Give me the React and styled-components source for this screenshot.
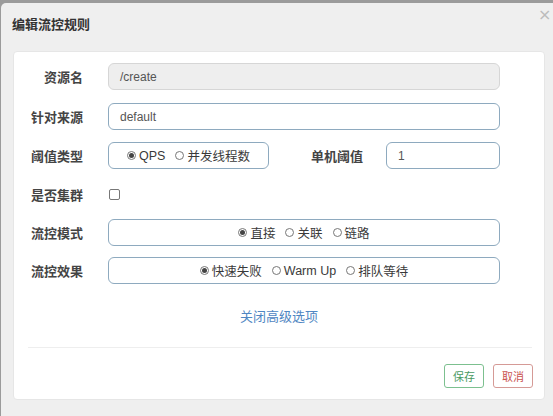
import React from 'react';
import styled, { createGlobalStyle } from 'styled-components';

const GlobalStyle = createGlobalStyle`
  html, body {
    margin: 0;
    padding: 0;
    width: 553px;
    height: 416px;
    overflow: hidden;
    background: #9b9b9b;
    font-family: 'Liberation Sans', 'Noto Sans CJK SC', sans-serif;
  }
`;

const DIALOG = styled.div`
  margin: 3px 0 0 1px;
  width: 552px;
  height: 413px;
  background: #efefef;
  border-radius: 5px 0 0 0;
  position: relative;
`;

const HEADER = styled.div`
  height: 48px;
  padding: 0 0 0 11px;
  display: flex;
  align-items: center;

  h3 {
    margin: 0 0 7px;
    font-size: 13px;
    font-weight: bold;
    color: #333;
  }
`;

const CLOSE = styled.span`
  position: absolute;
  left: 537px;
  top: 4px;
  font-size: 16px;
  line-height: 16px;
  color: #bcbcbc;
  font-family: 'DejaVu Sans', sans-serif;
`;

const PANEL = styled.div`
  margin-left: 12px;
  width: 532px;
  height: 349px;
  box-sizing: border-box;
  background: #fff;
  border: 1px solid #e6e6e6;
  border-radius: 4px;
  padding-top: 11px;
  display: flex;
  flex-direction: column;
`;

const ROW = styled.div`
  display: flex;
  align-items: center;
  height: 27px;
  margin-bottom: ${(p) => p.$mb ?? 12}px;
  padding-right: 44px;
`;

const LABEL = styled.label`
  width: ${(p) => p.$w || 69}px;
  flex: none;
  text-align: right;
  font-size: 13px;
  font-weight: bold;
  color: #444;
  margin-right: ${(p) => p.$gap || 25}px;
`;

const INPUT = styled.div`
  flex: 1;
  height: 27px;
  box-sizing: border-box;
  border: 1px solid ${(p) => (p.$disabled ? '#d6d6d6' : '#8eaabf')};
  background: ${(p) => (p.$disabled ? '#eeeeee' : '#fff')};
  border-radius: 6px;
  padding-left: 11px;
  display: flex;
  align-items: center;
  font-size: 12px;
  color: #555;
`;

const GROUP = styled.div`
  flex: ${(p) => (p.$w ? 'none' : '1')};
  width: ${(p) => (p.$w ? `${p.$w}px` : 'auto')};
  height: 27px;
  box-sizing: border-box;
  border: 1px solid #8eaabf;
  border-radius: 6px;
  display: flex;
  align-items: center;
  justify-content: center;
  gap: 10px;
  font-size: 12.5px;
  color: #3a3a3a;
`;

const OPTION = styled.span`
  display: flex;
  align-items: center;
  gap: 3px;
`;

const DOT = styled.span`
  width: 9px;
  height: 9px;
  border: 1px solid #777;
  border-radius: 50%;
  display: inline-flex;
  align-items: center;
  justify-content: center;
  box-sizing: border-box;

  &::after {
    content: '';
    width: 5px;
    height: 5px;
    border-radius: 50%;
    background: ${(p) => (p.$on ? '#444' : 'transparent')};
  }
`;

const CHECK = styled.span`
  width: 9px;
  height: 9px;
  margin-left: 1px;
  border: 1px solid #777;
  border-radius: 2px;
`;

const LINK = styled.a`
  align-self: center;
  margin-top: 22px;
  font-size: 13px;
  color: #4f86c2;
  text-decoration: none;
`;

const HR = styled.div`
  margin: 22px 12px 0 14px;
  height: 1px;
  background: #eeeeee;
`;

const FOOTER = styled.div`
  display: flex;
  justify-content: flex-end;
  gap: 9px;
  padding: 16px 11px 0 0;
`;

const BUTTON = styled.button`
  width: 40px;
  height: 24px;
  padding: 0;
  background: #fff;
  border: 1px solid ${(p) => (p.$danger ? '#d59a96' : '#7cc08f')};
  border-radius: 3px;
  color: ${(p) => (p.$danger ? '#c9534f' : '#4a9a62')};
  font-size: 11px;
  font-family: inherit;
`;

const Radio = ({ on, children }) => (
  <OPTION>
    <DOT $on={on} />
    {children}
  </OPTION>
);

export default function App() {
  return (
    <>
      <GlobalStyle />
      <DIALOG>
        <HEADER>
          <h3>编辑流控规则</h3>
        </HEADER>
        <CLOSE>×</CLOSE>
        <PANEL>
          <ROW $mb={13}>
            <LABEL>资源名</LABEL>
            <INPUT $disabled>/create</INPUT>
          </ROW>
          <ROW>
            <LABEL>针对来源</LABEL>
            <INPUT>default</INPUT>
          </ROW>
          <ROW>
            <LABEL>阈值类型</LABEL>
            <GROUP $w={161}>
              <Radio on>QPS</Radio>
              <Radio>并发线程数</Radio>
            </GROUP>
            <LABEL $w={94} $gap={23}>单机阈值</LABEL>
            <INPUT>1</INPUT>
          </ROW>
          <ROW $mb={11}>
            <LABEL>是否集群</LABEL>
            <CHECK />
          </ROW>
          <ROW $mb={11}>
            <LABEL>流控模式</LABEL>
            <GROUP>
              <Radio on>直接</Radio>
              <Radio>关联</Radio>
              <Radio>链路</Radio>
            </GROUP>
          </ROW>
          <ROW $mb={0}>
            <LABEL>流控效果</LABEL>
            <GROUP>
              <Radio on>快速失败</Radio>
              <Radio>Warm Up</Radio>
              <Radio>排队等待</Radio>
            </GROUP>
          </ROW>
          <LINK>关闭高级选项</LINK>
          <HR />
          <FOOTER>
            <BUTTON>保存</BUTTON>
            <BUTTON $danger>取消</BUTTON>
          </FOOTER>
        </PANEL>
      </DIALOG>
    </>
  );
}
